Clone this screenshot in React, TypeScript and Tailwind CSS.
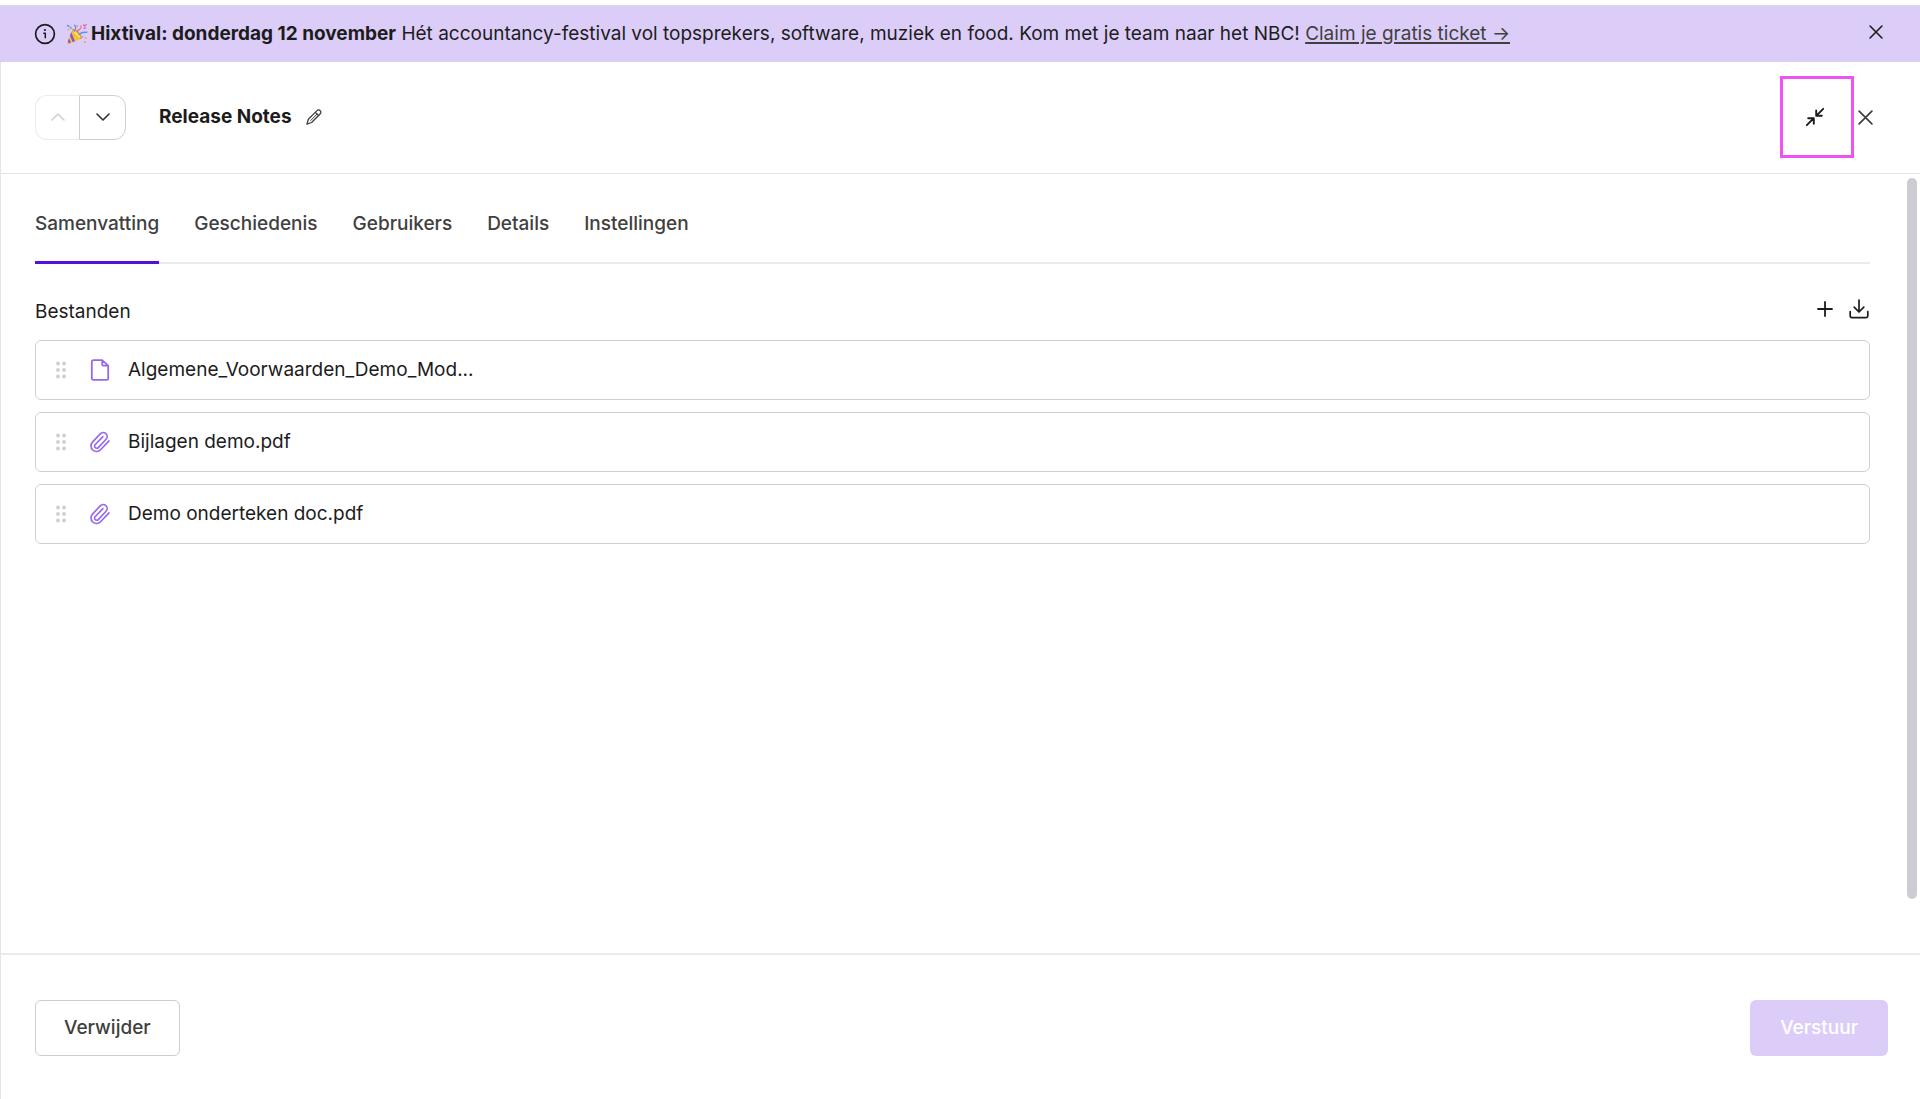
import type { ReactNode } from "react";

function Icon({ size, view, width = 1.5, children }: { size: number; view: number; width?: number; children: ReactNode }) {
  return (
    <svg
      width={size}
      height={size}
      viewBox={`0 0 ${view} ${view}`}
      fill="none"
      stroke="currentColor"
      strokeWidth={width}
      strokeLinecap="round"
      strokeLinejoin="round"
      aria-hidden="true"
      className="block shrink-0"
    >
      {children}
    </svg>
  );
}

function InfoIcon() {
  return (
    <Icon size={22} view={22} width={1.7}>
      <circle cx="11" cy="11" r="9.4" />
      <path d="M9.8 10.2h1.5v4.6" strokeWidth="1.5" />
      <circle cx="10.9" cy="7" r="1.1" fill="currentColor" stroke="none" />
    </Icon>
  );
}

function PartyIcon() {
  return (
    <svg width="22" height="22" viewBox="0 0 22 22" fill="none" aria-hidden="true" className="block shrink-0">
      <path d="M6.2 6.2 1.2 20.2c-.2.6.3 1.1.9.9l13.4-5.4Z" fill="#f6c632" />
      <path d="M5.2 9 9 18.2l-2.3 1L3.9 12.8ZM3 15.2l2 4.6-2 .8-1.2-2.2Z" fill="#8b58c9" />
      <ellipse cx="10.9" cy="10.9" rx="2.6" ry="6.6" transform="rotate(-44 10.9 10.9)" fill="#d9992a" />
      <ellipse cx="10.6" cy="11.2" rx="1.7" ry="5.4" transform="rotate(-44 10.6 11.2)" fill="#f9da55" />
      <path d="M8.2 8.2c1.8-1.8 2-4.4.4-6" stroke="#6b8ae8" strokeWidth="1.4" strokeLinecap="round" />
      <path d="M11.5 9.2c-.3-2.2 1.2-2.7 2.5-3.2 1.2-.5 1.3-1.7 1-3" stroke="#e2708d" strokeWidth="1.3" strokeLinecap="round" />
      <path d="M13 11.5c2.5-2.5 4.5-2.5 7.8-2.2" stroke="#5f92ee" strokeWidth="1.5" strokeLinecap="round" />
      <path d="m1.4 2.5 1.6.8M4.4 4.6l.8.5" stroke="#5f92ee" strokeWidth="1.4" strokeLinecap="round" />
      <path d="m17.6 1.8.9 1.4 1.8-1.6M18 5.4l1.6-.6" stroke="#df5f87" strokeWidth="1.2" strokeLinecap="round" />
      <circle cx="11.3" cy="3" r=".8" fill="#e2708d" />
      <circle cx="16.6" cy="13.8" r=".8" fill="#7b92df" />
      <circle cx="19.6" cy="14.8" r=".9" fill="#ec8b72" />
      <circle cx="18.8" cy="19" r=".9" fill="#eb9a5c" />
      <circle cx="2.4" cy="6.6" r=".8" fill="#ea8a6c" />
    </svg>
  );
}

function CloseIcon({ size }: { size: number }) {
  return (
    <Icon size={size} view={16} width={1.8}>
      <path d="m1.2 1.2 13.6 13.6M14.8 1.2 1.2 14.8" />
    </Icon>
  );
}

function PencilIcon() {
  return (
    <Icon size={16} view={16} width={1.3}>
      <path d="M11 1.6a2 2 0 0 1 3.2.2 2 2 0 0 1 .1 2.9L5.6 13.5.9 15.2l1.5-4.9Z" />
      <path d="m9.4 3.4 3.2 3.2" />
      <path d="m11.2 5-6.4 6.4" strokeWidth="1" />
    </Icon>
  );
}

function CollapseIcon() {
  return (
    <Icon size={20} view={20} width={1.9}>
      <path d="m18.2 1.8-7 7M11.2 3.4v5.4h5.6" />
      <path d="m1.8 18.2 7-7M3.2 11.2h5.6v5.6" />
    </Icon>
  );
}

function DownloadIcon() {
  return (
    <Icon size={20} view={20} width={1.7}>
      <path d="M10 1v12M5.2 8.2 10 13l4.8-4.8M1.2 12.6V17a1.6 1.6 0 0 0 1.6 1.6h14.4a1.6 1.6 0 0 0 1.6-1.6v-4.4" />
    </Icon>
  );
}

function GripIcon() {
  return (
    <svg width="10" height="18" viewBox="0 0 10 18" fill="currentColor" aria-hidden="true" className="block shrink-0">
      {[2.5, 9, 15.5].map((y) => (
        <g key={y}>
          <circle cx="2" cy={y} r="1.9" />
          <circle cx="8" cy={y} r="1.9" />
        </g>
      ))}
    </svg>
  );
}

function FileIcon() {
  return (
    <Icon size={22} view={22} width={1.8}>
      <path d="M13.2 1.2H4.400a1.600 1.600 0 0 0-1.600 1.600v16.400a1.600 1.600 0 0 0 1.600 1.600h13.200a1.600 1.600 0 0 0 1.600-1.600V6.600ZM13.200 1.200v4.200a1.300 1.300 0 0 0 1.300 1.300h4.700" />
    </Icon>
  );
}

function ClipIcon() {
  return (
    <Icon size={22} view={24} width={1.8}>
      <path d="m21.8 10.800-9.190 9.600a6 6 0 0 1-8.850-8.200l8.570-9.100a4.300 4.300 0 0 1 6.300 5.900l-8.590 9.100a2.300 2.300 0 0 1-3.400-3.100l8.490-8.900" />
    </Icon>
  );
}

const tabs = ["Samenvatting", "Geschiedenis", "Gebruikers", "Details", "Instellingen"];

const files = [
  { name: "Algemene_Voorwaarden_Demo_Mod...", kind: "file" },
  { name: "Bijlagen demo.pdf", kind: "attachment" },
  { name: "Demo onderteken doc.pdf", kind: "attachment" },
];

export default function App() {
  return (
    <div className="flex min-h-screen flex-col bg-white pt-[5px] font-['Inter',sans-serif] text-[19px] leading-7 text-[#1c1c1c]">
      <aside className="flex items-center border-t border-[#dcdbe0] bg-[#dccdf8] py-3.5 pr-9 pl-[34px]">
        <InfoIcon />
        <div className="ml-2.5 flex flex-1 items-center gap-[3px]">
          <PartyIcon />
          <p>
            <strong className="font-bold">Hixtival: donderdag 12 november</strong> Hét accountancy-festival vol
            topsprekers, software, muziek en food. Kom met je team naar het NBC!{" "}
            <a href="#ticket" className="text-[#404040] underline decoration-2 underline-offset-2">
              Claim je gratis ticket →
            </a>
          </p>
        </div>
        <button type="button" aria-label="Melding sluiten" className="-mt-1 flex size-4 items-center justify-center">
          <CloseIcon size={14} />
        </button>
      </aside>

      <div className="flex flex-1 flex-col border-l border-[#e5e4ea]">
        <header className="flex items-center border-b border-[#e4e4e8] pt-3.5 pr-[47px] pb-[15px] pl-[34px]">
          <div className="flex">
            <button
              type="button"
              disabled
              aria-label="Vorige"
              className="flex h-[45px] w-11 items-center justify-center rounded-l-xl border border-r-0 border-[#ebebeb] text-[#d0d0d0]"
            >
              <Icon size={14} view={14} width={1.6}>
                <path d="m1 10 6-6 6 6" />
              </Icon>
            </button>
            <button
              type="button"
              aria-label="Volgende"
              className="flex h-[45px] w-[47px] items-center justify-center rounded-r-xl border border-[#cfcfcf] text-[#303030]"
            >
              <Icon size={14} view={14} width={1.6}>
                <path d="m1 4 6 6 6-6" />
              </Icon>
            </button>
          </div>
          <h1 className="ml-[33px] font-bold">Release Notes</h1>
          <button type="button" aria-label="Naam bewerken" className="ml-3.5 text-[#404040]">
            <PencilIcon />
          </button>
          <div className="ml-auto flex items-center gap-1">
            <button
              type="button"
              aria-label="Verkleinen"
              className="flex h-[82px] w-[74px] items-center justify-center border-3 border-[#ee52f5] pr-1 text-[#1c1c1c]"
            >
              <CollapseIcon />
            </button>
            <button type="button" aria-label="Sluiten" className="text-[#404040]">
              <CloseIcon size={15} />
            </button>
          </div>
        </header>

        <main className="relative flex-1 pr-[50px] pl-[34px]">
          <nav aria-label="Onderdelen" className="flex gap-[35px] border-b-2 border-[#ebebef]">
            {tabs.map((tab, i) => (
              <button
                key={tab}
                type="button"
                aria-current={i === 0 ? "page" : undefined}
                className={
                  i === 0
                    ? "-mb-0.5 border-b-3 border-[#5210da] pt-9 pb-[23px] font-medium text-[#404040]"
                    : "-mb-0.5 border-b-3 border-transparent pt-9 pb-[23px] font-medium text-[#404040]"
                }
              >
                {tab}
              </button>
            ))}
          </nav>

          <div className="mt-7 flex items-center justify-between pr-px">
            <h2 className="pt-1.5">Bestanden</h2>
            <div className="flex items-center gap-4">
              <button type="button" aria-label="Bestand toevoegen">
                <Icon size={16} view={16} width={1.8}>
                  <path d="M8 1v14M1 8h14" />
                </Icon>
              </button>
              <button type="button" aria-label="Alles downloaden">
                <DownloadIcon />
              </button>
            </div>
          </div>

          <ul className="mt-3.5 flex flex-col gap-3">
            {files.map((file) => (
              <li key={file.name} className="flex items-center rounded-md border border-[#d0d0d2] py-[15px] pl-5">
                <span className="text-[#cfcfcf]">
                  <GripIcon />
                </span>
                <span className="ml-[23px] text-[#9669ec]">{file.kind === "file" ? <FileIcon /> : <ClipIcon />}</span>
                <span className="ml-[17px]">{file.name}</span>
              </li>
            ))}
          </ul>

          <div className="absolute top-1 right-[3px] bottom-[54px] w-2.5 rounded-full bg-[#cdccd2]" />
        </main>

        <footer className="flex items-center justify-between border-t-2 border-[#ebebef] pt-[45px] pr-8 pb-[43px] pl-[34px]">
          <button
            type="button"
            className="rounded-md border border-[#cdcdd0] px-7 py-[13px] font-medium text-[#404040]"
          >
            Verwijder
          </button>
          <button type="button" disabled className="rounded-md bg-[#dccdf8] px-[30px] py-3.5 font-medium text-white">
            Verstuur
          </button>
        </footer>
      </div>
    </div>
  );
}
